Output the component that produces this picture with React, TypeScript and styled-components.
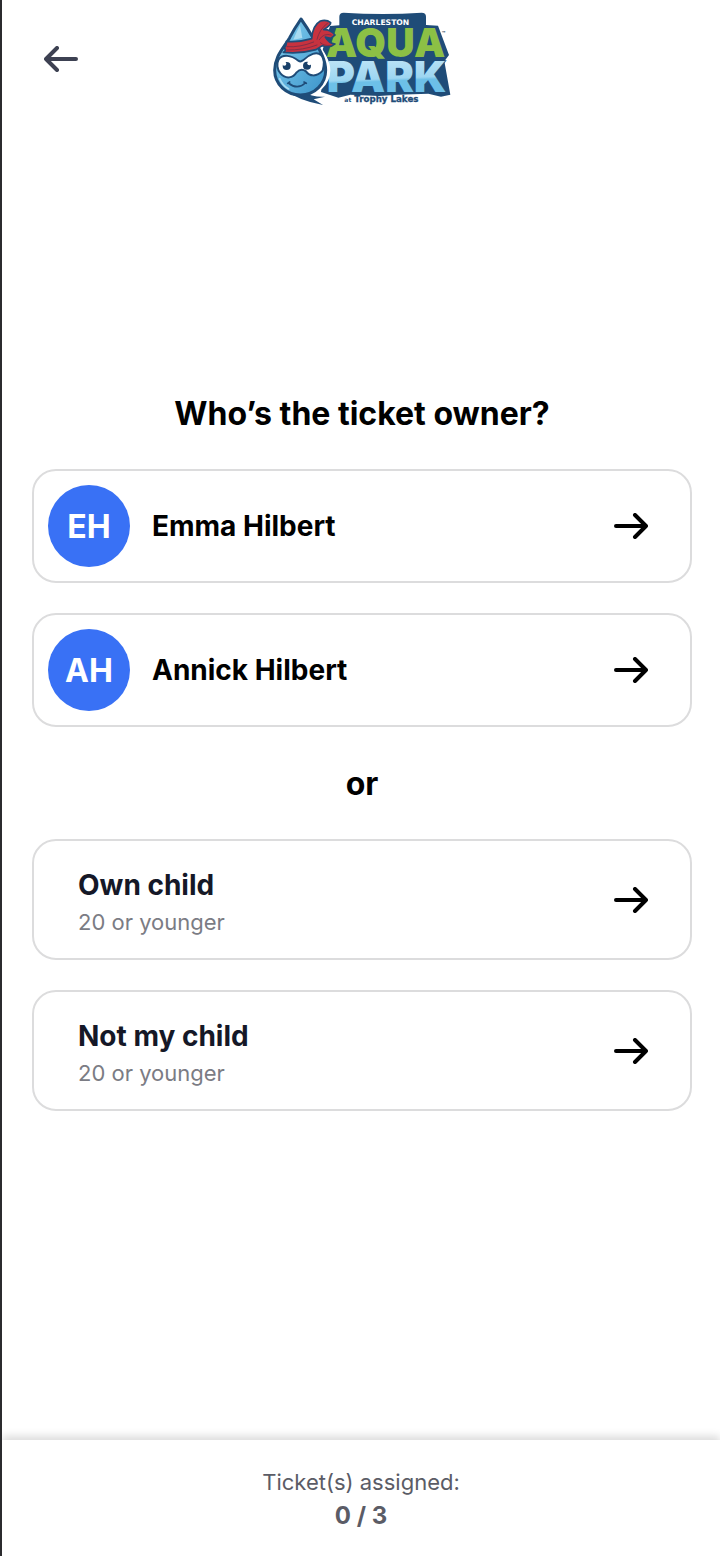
import React from 'react';
import styled, {createGlobalStyle} from 'styled-components';

interface Owner {
    initials: string;
    name: string;
}

interface ChildOption {
    title: string;
    hint: string;
}

const owners: Owner[] = [
    {initials: 'EH', name: 'Emma Hilbert'},
    {initials: 'AH', name: 'Annick Hilbert'},
];

const childOptions: ChildOption[] = [
    {title: 'Own child', hint: '20 or younger'},
    {title: 'Not my child', hint: '20 or younger'},
];

const App = () => {
    return (
        <>
            <GlobalStyle/>
            <Page>
                <Header>
                    <BackButton aria-label='Back'>
                        <ArrowIcon direction='left'/>
                    </BackButton>
                    <ParkLogo/>
                </Header>
                <Main>
                    <Heading>{'Who’s the ticket owner?'}</Heading>
                    <CardList>
                        {owners.map((owner) => (
                            <OwnerCard key={owner.initials}>
                                <Avatar>{owner.initials}</Avatar>
                                <CardTitle>{owner.name}</CardTitle>
                                <ArrowIcon direction='right'/>
                            </OwnerCard>
                        ))}
                    </CardList>
                    <Heading as='p'>{'or'}</Heading>
                    <CardList>
                        {childOptions.map((option) => (
                            <ChildCard key={option.title}>
                                <CardText>
                                    <CardTitle $muted={true}>{option.title}</CardTitle>
                                    <CardHint>{option.hint}</CardHint>
                                </CardText>
                                <ArrowIcon direction='right'/>
                            </ChildCard>
                        ))}
                    </CardList>
                </Main>
                <Footer>
                    <FooterLabel>{'Ticket(s) assigned:'}</FooterLabel>
                    <FooterCount>{'0 / 3'}</FooterCount>
                </Footer>
            </Page>
        </>
    );
};

interface ArrowIconProps {
    direction: 'left' | 'right';
}

const ArrowIcon = (props: ArrowIconProps) => (
    <ArrowSvg
        viewBox='0 0 34 26'
        aria-hidden={true}
    >
        <path d={props.direction === 'left' ? 'M32 13H2M13 2 2 13l11 11' : 'M2 13h30M21 2l11 11-11 11'}/>
    </ArrowSvg>
);

const ParkLogo = () => (
    <LogoSvg
        viewBox='0 0 600 345'
        preserveAspectRatio='xMidYMin meet'
        role='img'
        aria-label='Charleston Aqua Park at Trophy Lakes'
    >
        <defs>
            <linearGradient
                id='drop'
                x1='0'
                y1='0'
                x2='1'
                y2='1'
            >
                <stop
                    offset='0.3'
                    stopColor='#6fbfe6'
                />
                <stop
                    offset='1'
                    stopColor='#3b93c9'
                />
            </linearGradient>
            <linearGradient
                id='water'
                x1='0'
                y1='0'
                x2='0.1'
                y2='1'
            >
                <stop
                    offset='0.25'
                    stopColor='#b9e2f5'
                />
                <stop
                    offset='0.6'
                    stopColor='#9dd6f1'
                />
                <stop
                    offset='0.65'
                    stopColor='#6dc0e8'
                />
            </linearGradient>
        </defs>

        {/* wordmark backing */}
        <path
            d='M248 38Q366 46 482 38Q495 38 495 50V75L531 77L564 165L550 184L568 284L540 290L502 281L410 284L354 288L268 284L232 293L180 276L192 182L183 155L207 78L235 76V50Q235 38 248 38Z'
            fill='#1f4c78'
        />
        <LogoCaption
            x='272'
            y='74'
            $size={23}
            fill='#fff'
        >
            {'CHARLESTON'}
        </LogoCaption>
        <LogoText
            x='195'
            y='170'
            $size={118}
            fill='#8cc045'
            stroke='#1f4c78'
            strokeWidth='5'
        >
            {'AQUA'}
        </LogoText>
        <LogoText
            x='197'
            y='275'
            $size={129}
            fill='url(#water)'
            stroke='#1f4c78'
            strokeWidth='5'
        >
            {'PARK'}
        </LogoText>
        <LogoText
            x='542'
            y='106'
            $size={16}
            fill='#4d6379'
        >
            {'™'}
        </LogoText>
        <LogoCaption
            x='250'
            y='307'
            $size={18}
            fill='#1f4c78'
        >
            {'at'}
        </LogoCaption>
        <LogoCaption
            x='280'
            y='307'
            $size={26}
            fill='#1f4c78'
            stroke='#1f4c78'
            strokeWidth='1'
        >
            {'Trophy Lakes'}
        </LogoCaption>

        {/* ninja drop */}
        <path
            d='M120 57Q101 84 86 113C69 143 41 168 41 211C41 253 76 285 118 285C168 285 203 251 203 211C203 176 175 145 155 112Q138 82 120 57Z'
            fill='#fff'
            stroke='#fff'
            strokeWidth='10'
        />
        <path
            d='M76 272Q112 301 186 315L158 298L192 290Q155 292 125 276Z'
            fill='#1f4c78'
        />
        <path
            d='M120 57Q101 84 86 113C69 143 41 168 41 211C41 253 76 285 118 285C162 285 194 251 194 211C194 176 173 145 155 112Q138 82 120 57Z'
            fill='url(#drop)'
            stroke='#1f4c78'
            strokeWidth='9'
            strokeLinejoin='round'
        />
        <path
            d='M117 76Q105 99 97 119L124 114Z'
            fill='#a9dbf1'
        />
        <path
            d='M53 178C65 162 90 165 112 182Q119 187 126 181C145 162 168 153 181 166C193 179 189 197 185 212C167 232 145 229 135 214Q120 203 107 217C96 235 74 238 59 221C47 208 47 190 53 178Z'
            fill='#fff'
            stroke='#1f4c78'
            strokeWidth='6'
            strokeLinejoin='round'
        />
        <path
            d='M76 124Q116 127 152 116Q154 77 178 63Q197 58 209 68Q210 76 188 89Q208 88 222 105L209 115L193 111Q204 130 222 132Q208 145 184 137L165 149Q119 162 67 157Q78 150 69 144Q77 138 76 124Z'
            fill='#c8323f'
            stroke='#1f4c78'
            strokeWidth='5'
            strokeLinejoin='round'
        />
        <path
            d='M78 140Q116 143 158 126M77 150Q127 151 168 135M168 118Q175 88 200 69M175 119Q187 98 211 105M178 128Q190 139 209 136'
            fill='none'
            stroke='#832e46'
            strokeWidth='3'
            strokeLinecap='round'
        />
        <circle
            cx='77'
            cy='198'
            r='12'
            fill='#194069'
        />
        <circle
            cx='138'
            cy='197'
            r='12'
            fill='#194069'
        />
        <circle
            cx='70'
            cy='191'
            r='6'
            fill='#fff'
        />
        <circle
            cx='145'
            cy='190'
            r='6'
            fill='#fff'
        />
        <path
            d='M82 249Q109 271 133 249M80 250L86 246M129 246L136 250'
            fill='none'
            stroke='#1f4c78'
            strokeWidth='5'
            strokeLinecap='round'
        />
        <path
            d='M56 236Q64 257 83 267'
            fill='none'
            stroke='#a9dbf1'
            strokeWidth='5'
            strokeLinecap='round'
        />
    </LogoSvg>
);

// Styled components
const GlobalStyle = createGlobalStyle`
    *, *::before, *::after {
        box-sizing: border-box;
    }

    body {
        margin: 0;
        background: #fff;
        font-family: Inter, 'Liberation Sans', sans-serif;
    }

    button {
        font: inherit;
        color: inherit;
        cursor: pointer;
    }
`;

const Page = styled.div`
    display: flex;
    flex-direction: column;
    min-height: 100vh;
    border-left: 2px solid #2b2b2e;
    background: #fff;
    overflow: hidden;
`;

const Header = styled.header`
    display: grid;
    grid-template-columns: 1fr auto 1fr;
    align-items: center;
    padding: 0 30px;
`;

const BackButton = styled.button`
    display: flex;
    justify-self: start;
    padding: 12px;
    border: 0;
    background: none;
    color: #3d4152;
`;

const ArrowSvg = styled.svg`
    flex-shrink: 0;
    width: 34px;
    height: 26px;
    fill: none;
    stroke: currentColor;
    stroke-width: 4;
    stroke-linecap: round;
    stroke-linejoin: round;
`;

const LogoSvg = styled.svg`
    width: 200px;
    height: 118px;
`;

const LogoText = styled.text<{$size: number}>`
    font-family: Inter, sans-serif;
    font-size: ${(props) => props.$size}px;
    font-weight: 900;
    paint-order: stroke;
`;

const LogoCaption = styled(LogoText)`
    font-family: 'DejaVu Sans', sans-serif;
    font-weight: 700;
`;

const Main = styled.main`
    flex: 1;
    display: flex;
    flex-direction: column;
    justify-content: center;
    gap: 36px;
    padding: 0 28px 54px 30px;
`;

const Heading = styled.h1`
    margin: 0;
    padding-top: 2px;
    font-size: 32px;
    font-weight: 700;
    line-height: 38px;
    text-align: center;
    color: #000;
`;

const CardList = styled.div`
    display: flex;
    flex-direction: column;
    gap: 30px;
`;

const Card = styled.button`
    display: flex;
    align-items: center;
    width: 100%;
    border: 2px solid #dcdcdd;
    border-radius: 24px;
    background: #fff;
    color: #000;
    text-align: left;
`;

const OwnerCard = styled(Card)`
    gap: 22px;
    padding: 14px 42px 14px 14px;
`;

const ChildCard = styled(Card)`
    padding: 0 42px 0 44px;
`;

const Avatar = styled.span`
    display: flex;
    align-items: center;
    justify-content: center;
    flex-shrink: 0;
    width: 82px;
    height: 82px;
    border-radius: 50%;
    background: #3971f5;
    font-size: 32px;
    font-weight: 700;
    color: #fff;
`;

const CardText = styled.span`
    flex: 1;
    display: flex;
    flex-direction: column;
    padding: 24px 0 19px;
`;

const CardTitle = styled.span<{$muted?: boolean}>`
    flex: 1;
    font-size: 28px;
    font-weight: 700;
    line-height: 40px;
    color: ${(props) => (props.$muted ? '#151827' : '#000')};
`;

const CardHint = styled.span`
    font-size: 22px;
    line-height: 34px;
    color: #7b7c84;
`;

const Footer = styled.footer`
    display: flex;
    flex-direction: column;
    align-items: center;
    padding: 25px 28px 23px;
    background: #fff;
    box-shadow: 0 -4px 8px rgba(0, 0, 0, 0.14);
    color: #5b5c66;
`;

const FooterLabel = styled.span`
    font-size: 22px;
    line-height: 34px;
`;

const FooterCount = styled.strong`
    font-size: 24px;
    font-weight: 700;
    line-height: 34px;
`;

export default App;
